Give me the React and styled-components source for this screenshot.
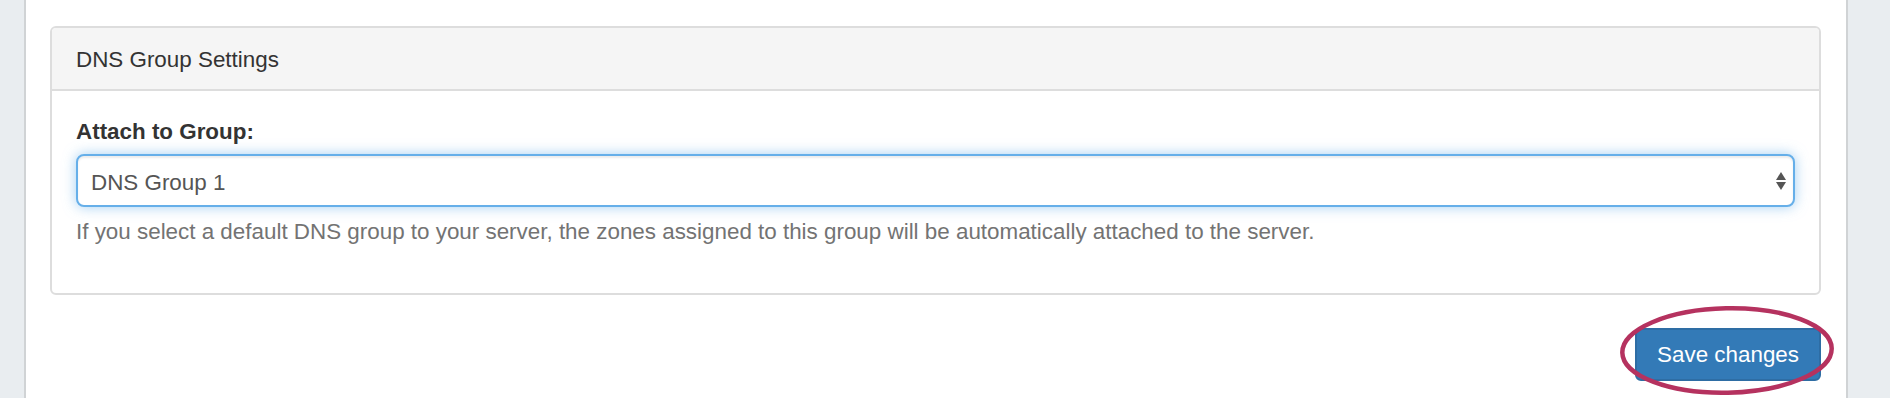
import React from 'react'
import styled, { createGlobalStyle } from 'styled-components'

const fontStack = '"Liberation Sans", Arial, "Helvetica Neue", sans-serif';
const baseFont = "22.4px";

const GlobalStyle = createGlobalStyle`
  html, body {
    margin: 0;
    padding: 0;
    background-color: #e9edf0;
  }
  body {
    font-family: ${fontStack};
    font-size: ${baseFont};
    color: #333;
  }
`

const Shell = styled.div`
  display: flex;
  padding: 0 42px 0 24px;
  min-height: 398px;
  box-sizing: border-box;
`

const Column = styled.main`
  flex: 1;
  background-color: #fff;
  border-left: 2px solid #d0d3d5;
  border-right: 2px solid #d0d3d5;
  padding: 26px 25px 17px 24px;
  display: flex;
  flex-direction: column;
`

const Panel = styled.section`
  border: 2px solid #dddddd;
  border-radius: 6px;
  background-color: #fff;
  margin-bottom: 33px;
`

const PanelHeading = styled.div`
  background-color: #f5f5f5;
  border-bottom: 2px solid #dddddd;
  border-radius: 4px 4px 0 0;
  padding: 16px 24px 13px;
  line-height: 32px;
  color: #333;
`

const PanelBody = styled.div`
  padding: 25px 24px 45px;
`

const Label = styled.label`
  display: block;
  font-weight: bold;
  line-height: 32px;
  margin-bottom: 6px;
  color: #333;
`

const SelectWrap = styled.div`
  position: relative;
`

const Select = styled.select`
  display: block;
  width: 100%;
  height: 53px;
  box-sizing: border-box;
  appearance: none;
  -webkit-appearance: none;
  font-family: ${fontStack};
  font-size: ${baseFont};
  color: #555;
  background-color: #fff;
  border: 2px solid #66afe9;
  border-radius: 8px;
  padding: 3px 40px 0 13px;
  outline: none;
  box-shadow: inset 0 2px 2px rgba(0,0,0,0.075), 0 0 13px rgba(102,175,233,0.6);
`

const Arrows = styled.svg`
  position: absolute;
  right: 9px;
  top: 18px;
  pointer-events: none;
`

const HelpText = styled.p`
  margin: 9px 0 0;
  line-height: 32px;
  color: #737373;
`

const Footer = styled.div`
  display: flex;
  justify-content: flex-end;
`

const ButtonWrap = styled.div`
  position: relative;
  display: inline-flex;
`

const Button = styled.button`
  height: 53px;
  padding: 0 20px;
  font-family: ${fontStack};
  font-size: ${baseFont};
  color: #fff;
  background-color: #337ab7;
  border: 2px solid #2e6da4;
  border-radius: 6px;
  cursor: pointer;
`

const Highlight = styled.svg`
  position: absolute;
  left: -15px;
  top: -22px;
  overflow: visible;
  pointer-events: none;
`

const App = () => (
  <>
    <GlobalStyle />
    <Shell>
      <Column>
        <Panel>
          <PanelHeading>DNS Group Settings</PanelHeading>
          <PanelBody>
            <Label htmlFor="dns-group">Attach to Group:</Label>
            <SelectWrap>
              <Select id="dns-group" defaultValue="1">
                <option value="1">DNS Group 1</option>
                <option value="2">DNS Group 2</option>
              </Select>
              <Arrows width="10" height="18" viewBox="0 0 10 18">
                <path d="M5 0 L10 8 L0 8 Z" fill="#555" />
                <path d="M0 10 L10 10 L5 18 Z" fill="#555" />
              </Arrows>
            </SelectWrap>
            <HelpText>
              If you select a default DNS group to your server, the zones assigned to this group will be automatically attached to the server.
            </HelpText>
          </PanelBody>
        </Panel>

        <Footer>
          <ButtonWrap>
            <Button type="button">Save changes</Button>
            <Highlight width="214" height="89" viewBox="0 0 214 89">
              <ellipse cx="107" cy="44.5" rx="104.7" ry="42.2" fill="none" stroke="#b5325f" strokeWidth="4.5" transform="rotate(-1.2 107 44.5)" />
            </Highlight>
          </ButtonWrap>
        </Footer>
      </Column>
    </Shell>
  </>
)

export default App
